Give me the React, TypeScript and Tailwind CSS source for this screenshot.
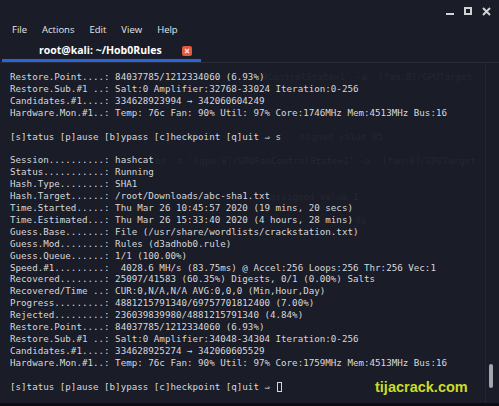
import React from "react";

const mono = { fontFamily: '"DejaVu Sans Mono", "Liberation Mono", monospace' };

type Line = string | { pre: string; arrow: string; post: string } | null;

const lines: Line[] = [
  "Restore.Point....: 84037785/1212334060 (6.93%)",
  "Restore.Sub.#1 ..: Salt:0 Amplifier:32768-33024 Iteration:0-256",
  { pre: "Candidates.#1....: 334628923994", arrow: "→", post: "342060604249" },
  "Hardware.Mon.#1..: Temp: 76c Fan: 90% Util: 97% Core:1746MHz Mem:4513MHz Bus:16",
  null,
  { pre: "[s]tatus [p]ause [b]ypass [c]heckpoint [q]uit", arrow: "⇒", post: "s" },
  null,
  "Session..........: hashcat",
  "Status...........: Running",
  "Hash.Type........: SHA1",
  "Hash.Target......: /root/Downloads/abc-sha1.txt",
  "Time.Started.....: Thu Mar 26 10:45:57 2020 (19 mins, 20 secs)",
  "Time.Estimated...: Thu Mar 26 15:33:40 2020 (4 hours, 28 mins)",
  "Guess.Base.......: File (/usr/share/wordlists/crackstation.txt)",
  "Guess.Mod........: Rules (d3adhob0.rule)",
  "Guess.Queue......: 1/1 (100.00%)",
  "Speed.#1.........:  4028.6 MH/s (83.75ms) @ Accel:256 Loops:256 Thr:256 Vec:1",
  "Recovered........: 25097/41583 (60.35%) Digests, 0/1 (0.00%) Salts",
  "Recovered/Time ..: CUR:0,N/A,N/A AVG:0,0,0 (Min,Hour,Day)",
  "Progress.........: 4881215791340/69757701812400 (7.00%)",
  "Rejected.........: 236039839980/4881215791340 (4.84%)",
  "Restore.Point....: 84037785/1212334060 (6.93%)",
  "Restore.Sub.#1 ..: Salt:0 Amplifier:34048-34304 Iteration:0-256",
  { pre: "Candidates.#1....: 334628925274", arrow: "→", post: "342060605529" },
  "Hardware.Mon.#1..: Temp: 76c Fan: 90% Util: 97% Core:1759MHz Mem:4513MHz Bus:16",
  null,
];

// faint text from the window behind (transparent terminal)
const ghosts = [
  { top: 0, left: 262, text: "NControlState=1' -a '[fan:0]/GPUTarget" },
  { top: 60, left: 300, text: "signed value 85." },
  { top: 84, left: 155, text: "es -a '[gpu:0]/GPUFanControlState=1' -a '[fan:0]/GPUTarget" },
  { top: 120, left: 270, text: "assigned value 1." },
  { top: 144, left: 355, text: "90." },
];

function TermLine({ line }: { line: Line }) {
  if (line === null) return <div className="h-[11.92px]" />;
  if (typeof line === "string") return <div className="h-[11.92px] whitespace-pre">{line}</div>;
  return (
    <div className="h-[11.92px] whitespace-pre">
      {line.pre}
      <span className="inline-block w-[3ch] text-center">{line.arrow}</span>
      {line.post}
    </div>
  );
}

export default function App() {
  return (
    <div className="relative w-[499px] h-[406px] overflow-hidden bg-[#1a1c27] text-[#d7d8db]" style={{ fontFamily: '"Open Sans", "Noto Sans", sans-serif' }}>
      {/* title bar */}
      <div className="h-[20px] flex items-center justify-end gap-[10px] pr-[8px] pt-[2px]">
        <div className="w-[8px] h-[2px] bg-[#d0d2d6] mt-[6px]" />
        <div className="w-[8px] h-[8px] border-2 border-[#d0d2d6]" />
        <svg width="9" height="9" viewBox="0 0 9 9" className="text-[#d0d2d6]">
          <path d="M1 1L8 8M8 1L1 8" stroke="currentColor" strokeWidth="2" />
        </svg>
      </div>

      {/* menu */}
      <div className="h-[20px] flex items-center gap-[15px] pl-[12px] text-[9.5px] text-[#e4e5e8]">
        <span>File</span>
        <span>Actions</span>
        <span>Edit</span>
        <span>View</span>
        <span>Help</span>
      </div>

      {/* tab */}
      <div className="relative h-[23px] border-b border-[#2a2c36]">
        <div className="w-[199px] ml-[2px] h-full flex items-center pt-[2px] border-b-[3px] border-[#2a64d6]">
          <span className="ml-[37px] text-[10.5px] font-bold text-white">root@kali: ~/Hob0Rules</span>
          <div className="ml-auto mr-[9px] w-[10px] h-[10px] rounded-[2px] bg-[#e2593d] flex items-center justify-center">
            <svg width="6" height="6" viewBox="0 0 6 6">
              <path d="M1 1L5 5M5 1L1 5" stroke="#fbe3dc" strokeWidth="1.5" />
            </svg>
          </div>
        </div>
      </div>

      {/* terminal */}
      <div className="flex h-[343px]">
        <div className="relative flex-1 pl-[10px] pt-[8px] text-[9.2px] leading-[11.92px]" style={mono}>
          {ghosts.map((g, i) => (
            <div key={i} className="absolute whitespace-pre text-[#242735]" style={{ top: 8 + g.top, left: g.left }}>
              {g.text}
            </div>
          ))}
          <div className="relative">
            {lines.map((l, i) => (
              <TermLine key={i} line={l} />
            ))}
            <div className="h-[11.92px] whitespace-pre flex items-center">
              {"[s]tatus [p]ause [b]ypass [c]heckpoint [q]uit"}
              <span className="inline-block w-[3ch] text-center">⇒</span>
              <span className="inline-block w-[5px] h-[10px] border border-[#d7d8db] ml-[1px]" />
            </div>
          </div>
        </div>
        <div className="w-[14px] relative border-l border-[#232532]">
          <div className="absolute left-[3px] top-[301px] w-[4px] h-[24px] rounded-full bg-[#a3a6ad]" />
        </div>
      </div>

      <div className="absolute left-[375px] top-[377px] text-[14.5px] font-bold text-[#cadd28]" style={{ fontFamily: '"Liberation Sans", Arial, sans-serif' }}>
        tijacrack.com
      </div>
      <div className="absolute left-0 right-0 bottom-0 h-[3px] bg-[#0c0d12]" />
    </div>
  );
}
